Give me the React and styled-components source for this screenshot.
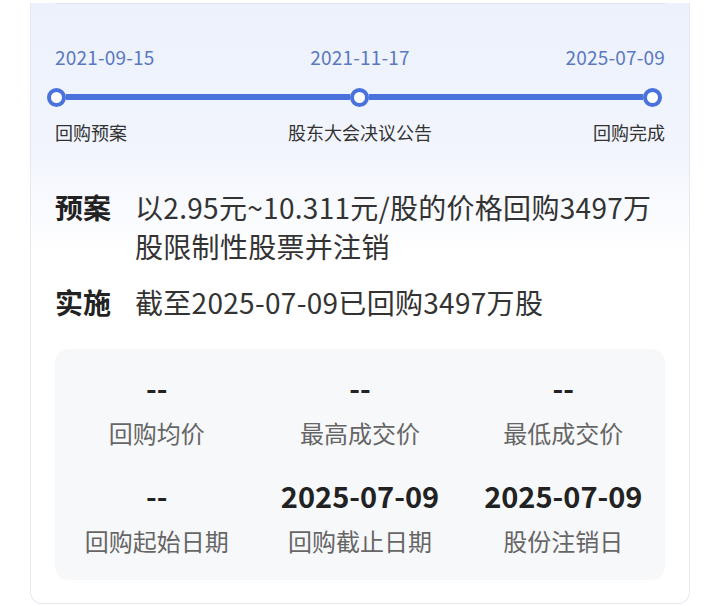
import React from "react";
import styled, { createGlobalStyle } from "styled-components";

const Global = createGlobalStyle`
  html, body { margin: 0; padding: 0; background: #ffffff; }
  body { font-family: "Noto Sans CJK SC", "Noto Sans", sans-serif; color: #222; }
  * { box-sizing: border-box; }
`;

const Page = styled.div`
  padding: 0 30px 0 30px;
`;

const Card = styled.div`
  border: 1px solid #e4e9f0;
  border-top: none;
  border-radius: 0 0 12px 12px;
  background: linear-gradient(180deg, #ecf1fc 0px, #f2f5fd 150px, #ffffff 250px);
  padding: 0 24px 23px 24px;
`;

const Divider = styled.div`
  margin-top: 3px;
  height: 1px;
  background: #dfe5ef;
`;

const Timeline = styled.div`
  margin-top: 40px;
  display: flex;
  flex-direction: column;
`;

const Row = styled.div`
  display: flex;
  justify-content: space-between;
  align-items: center;
`;

const DateText = styled.span`
  font-size: 19px;
  line-height: 26px;
  letter-spacing: 0.2px;
  color: #5a79c0;
`;

const Track = styled.div`
  display: flex;
  align-items: center;
  margin: 17px 3px 0 -8px;
  height: 20px;
`;

const Dot = styled.span`
  width: 19px;
  height: 19px;
  border-radius: 50%;
  border: 4px solid #4a72dd;
  background: #fff;
  flex: none;
`;

const Segment = styled.span`
  height: 6px;
  background: #4a72dd;
  flex: ${(p) => p.$grow} 1 0;
`;

const StageText = styled.span`
  margin-top: 12px;
  font-size: 18px;
  line-height: 26px;
  color: #333;
`;

const Plan = styled.div`
  margin-top: 43px;
  display: flex;
  flex-direction: column;
  gap: 17px;
`;

const PlanRow = styled.div`
  display: grid;
  grid-template-columns: 80px 1fr;
  font-size: 28px;
  line-height: 39px;
`;

const PlanLabel = styled.span`
  font-weight: 700;
  color: #222;
`;

const PlanText = styled.span`
  color: #333;
  letter-spacing: 0.3px;
`;

const Stats = styled.div`
  margin-top: 27px;
  background: #f7f8fa;
  border-radius: 14px;
  padding: 21px 0 23px;
  display: grid;
  grid-template-columns: repeat(3, 1fr);
  row-gap: 29px;
`;

const Stat = styled.div`
  display: flex;
  flex-direction: column;
  align-items: center;
  gap: 13px;
`;

const StatValue = styled.span`
  font-size: 29px;
  line-height: 34px;
  font-weight: 700;
  color: #222;
`;

const StatLabel = styled.span`
  font-size: 24px;
  line-height: 32px;
  color: #666;
`;

const dates = ["2021-09-15", "2021-11-17", "2025-07-09"];
const stages = ["回购预案", "股东大会决议公告", "回购完成"];
const stats = [
  ["--", "回购均价"],
  ["--", "最高成交价"],
  ["--", "最低成交价"],
  ["--", "回购起始日期"],
  ["2025-07-09", "回购截止日期"],
  ["2025-07-09", "股份注销日"],
];

export default function App() {
  return (
    <Page>
      <Global />
      <Card>
        <Divider />
        <Timeline>
          <Row>
            {dates.map((d, i) => (
              <DateText key={i}>{d}</DateText>
            ))}
          </Row>
          <Track>
            <Dot />
            <Segment $grow={284} />
            <Dot />
            <Segment $grow={274} />
            <Dot />
          </Track>
          <Row>
            {stages.map((s) => (
              <StageText key={s}>{s}</StageText>
            ))}
          </Row>
        </Timeline>
        <Plan>
          <PlanRow>
            <PlanLabel>预案</PlanLabel>
            <PlanText>以2.95元~10.311元/股的价格回购3497万股限制性股票并注销</PlanText>
          </PlanRow>
          <PlanRow>
            <PlanLabel>实施</PlanLabel>
            <PlanText>截至2025-07-09已回购3497万股</PlanText>
          </PlanRow>
        </Plan>
        <Stats>
          {stats.map(([v, l]) => (
            <Stat key={l}>
              <StatValue>{v}</StatValue>
              <StatLabel>{l}</StatLabel>
            </Stat>
          ))}
        </Stats>
      </Card>
    </Page>
  );
}
